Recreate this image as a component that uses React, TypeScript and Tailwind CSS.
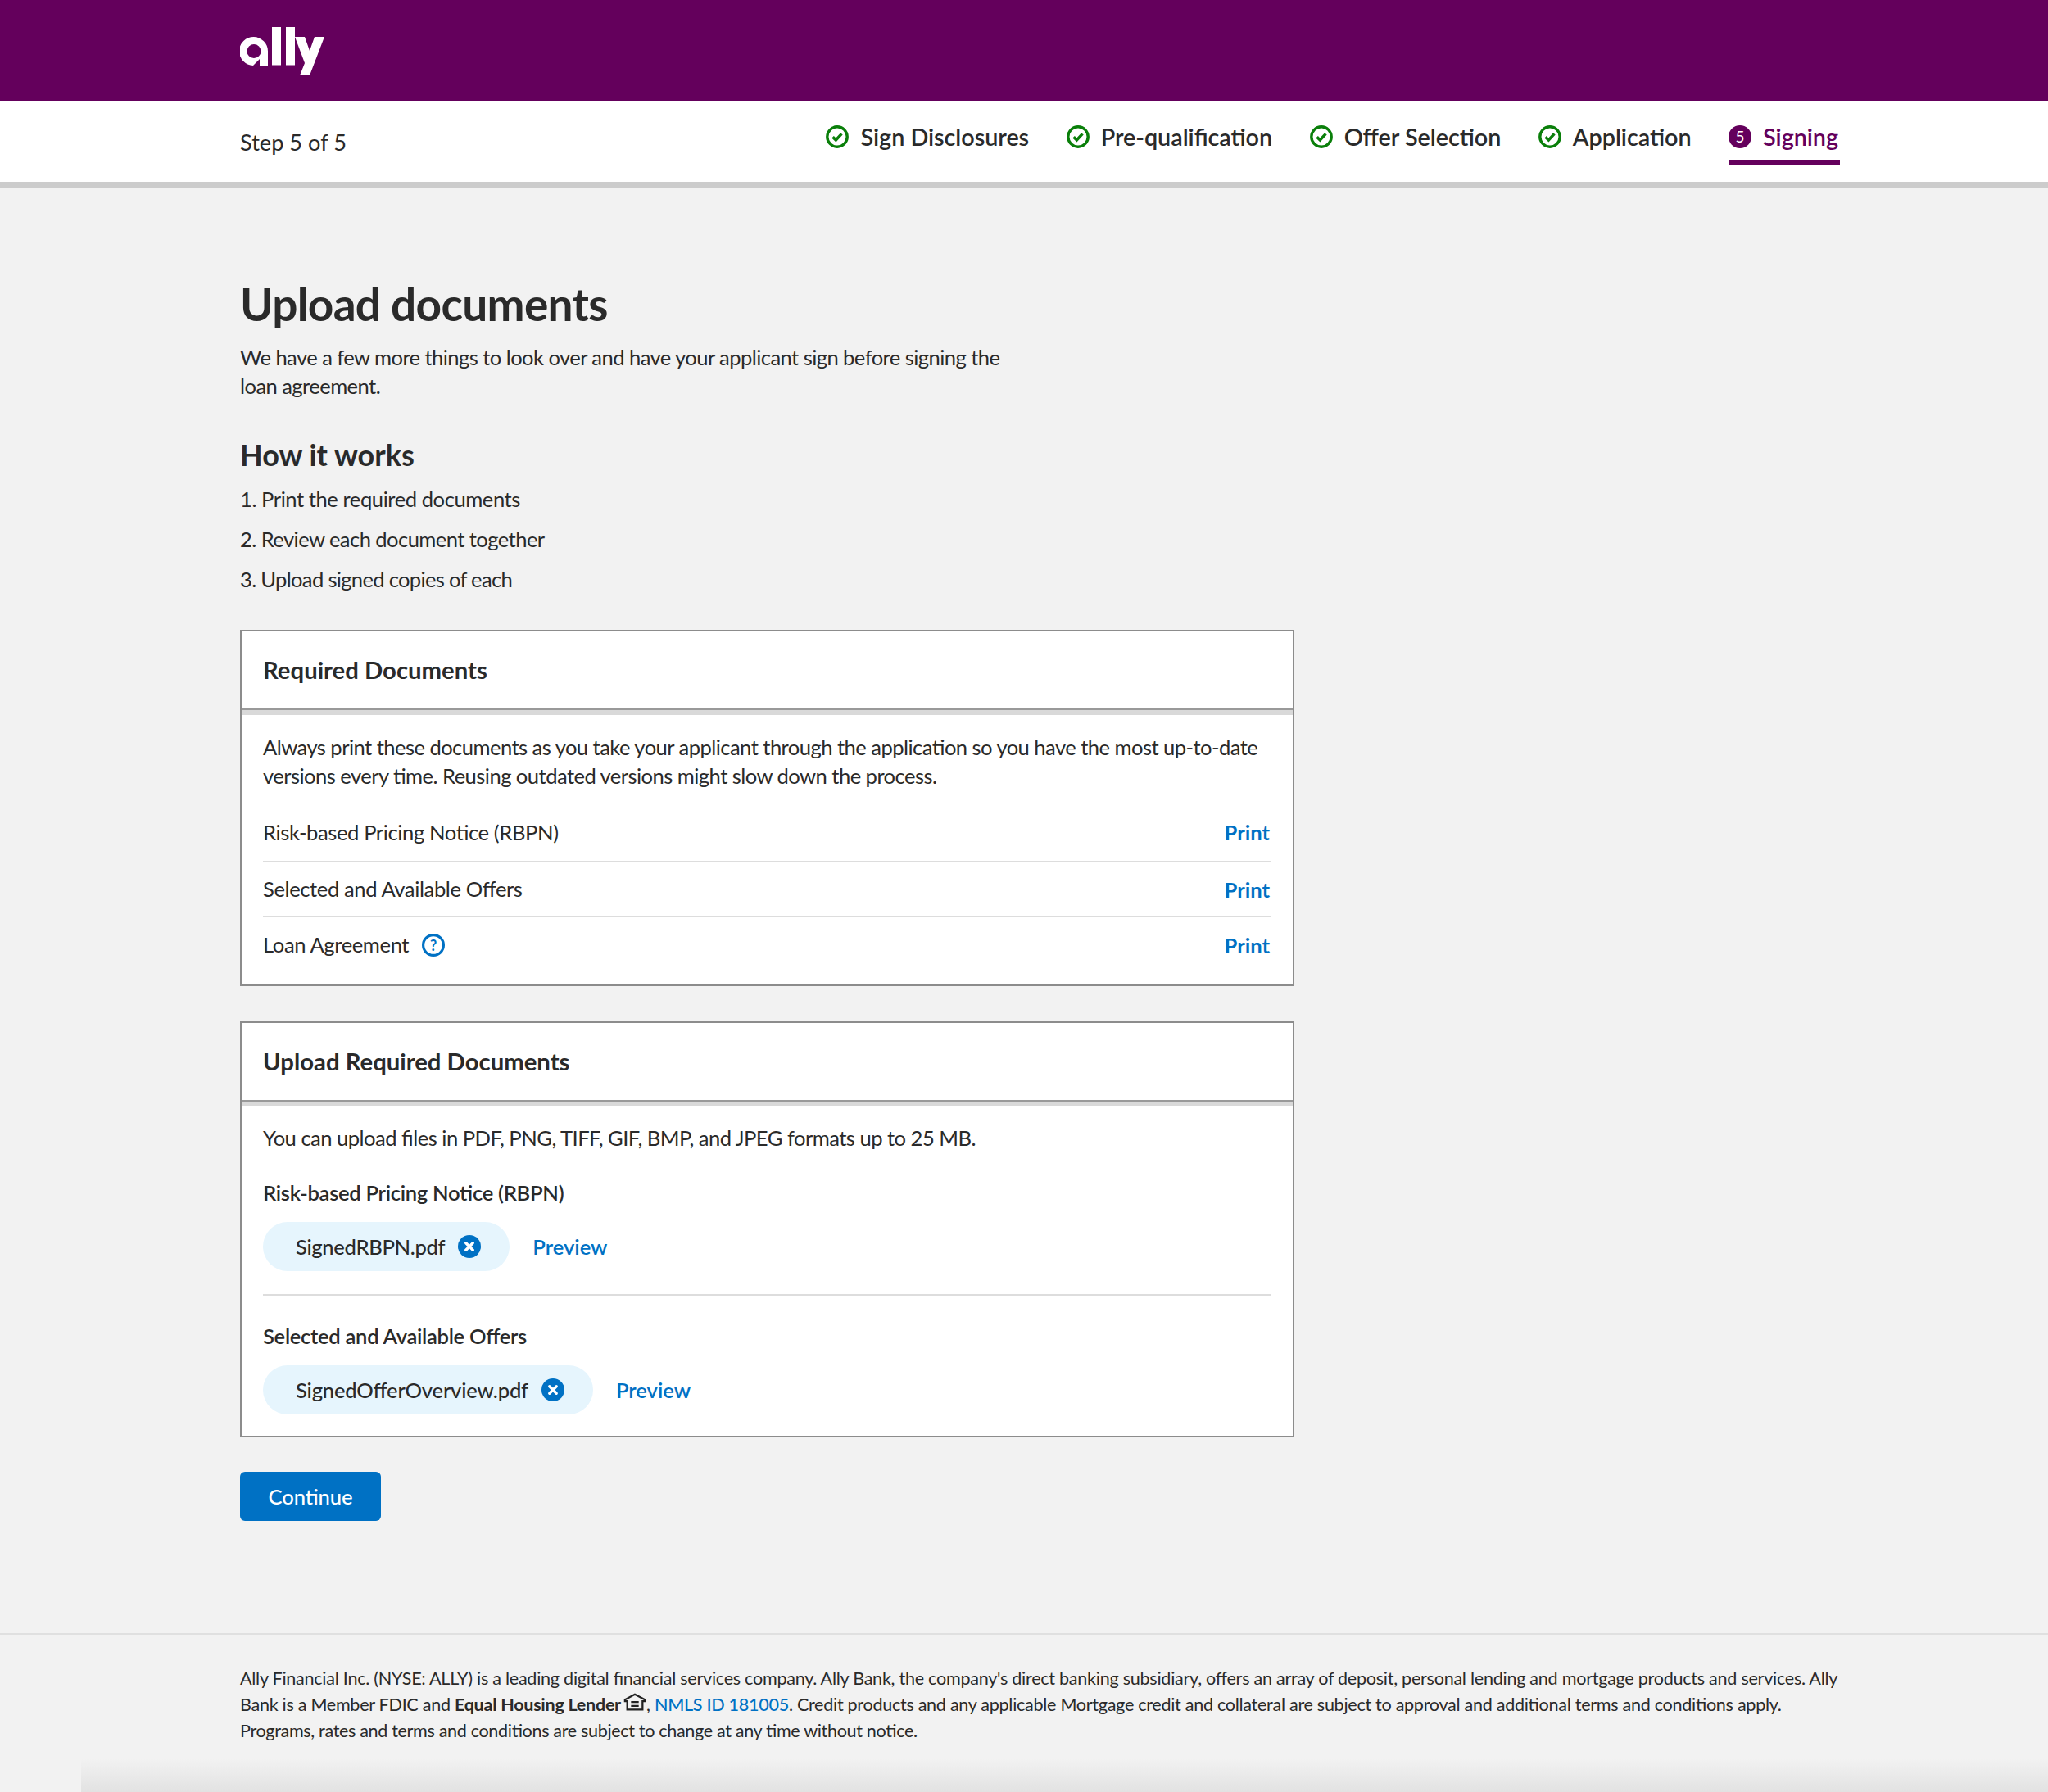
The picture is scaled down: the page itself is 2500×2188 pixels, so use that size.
import { FC, ReactNode } from "react";

const steps = ["Sign Disclosures", "Pre-qualification", "Offer Selection", "Application"];

const CheckIcon: FC = () => (
  <svg width="28" height="28" viewBox="0 0 28 28" className="shrink-0">
    <circle cx="14" cy="14" r="12.2" fill="none" stroke="#0a7f0a" strokeWidth="3.4" />
    <path d="M8.6 14.2l3.8 3.8 7-7.6" fill="none" stroke="#0a7f0a" strokeWidth="3.6" />
  </svg>
);

const RemoveIcon: FC = () => (
  <svg width="28" height="28" viewBox="0 0 28 28" className="shrink-0">
    <circle cx="14" cy="14" r="14" fill="#0071c4" />
    <path d="M9.8 9.8l8.4 8.4M18.2 9.8l-8.4 8.4" stroke="#fff" strokeWidth="3.4" strokeLinecap="round" />
  </svg>
);

const Logo: FC = () => (
  <svg width="103" height="60" viewBox="0 0 103 60" fill="#fff">
    <path
      fillRule="evenodd"
      d="M34 47H24V39L16 47A17.5 17.5 0 1 1 34 29.5ZM17 21A8.5 8.5 0 1 0 17 38A8.5 8.5 0 1 0 17 21Z"
    />
    <rect x="39" y="0" width="11" height="46.5" />
    <rect x="56" y="0" width="11" height="46.5" />
    <path d="M67 12H79L85 29L91 12H103L85 59H73L79 44Z" />
  </svg>
);

const Panel: FC<{ title: string; children: ReactNode }> = ({ title, children }) => (
  <section className="w-[1287px] border-2 border-[#8c8c8c] bg-white">
    <div className="flex h-[96px] items-center border-b-2 border-[#999999] px-[26px] pb-[2px]">
      <h3 className="text-[29.3px] font-bold tracking-normal">{title}</h3>
    </div>
    <div className="h-[6px] bg-[#d9d9d9]" />
    {children}
  </section>
);

const PrintRow: FC<{ label: string; help?: boolean; line?: boolean; tall?: boolean }> = ({ label, help, line, tall }) => (
  <div
    className={`flex items-center justify-between tracking-[-0.4px] ${tall ? "h-[69px] pb-[3px]" : "h-[67px]"} ${
      line ? "border-b-2 border-[#dddddd]" : ""
    }`}
  >
    <span className="flex items-center gap-4">
      {label}
      {help && (
        <svg width="28" height="28" viewBox="0 0 28 28">
          <circle cx="14" cy="14" r="12.4" fill="none" stroke="#0071c4" strokeWidth="3.2" />
          <text x="14" y="20.5" textAnchor="middle" fontSize="18" fontWeight="700" fill="#0071c4">
            ?
          </text>
        </svg>
      )}
    </span>
    <a className="pr-[2px] pt-[1px] font-bold tracking-normal text-[#0071c4]">Print</a>
  </div>
);

const FileChip: FC<{ name: string; tight?: boolean }> = ({ name, tight }) => (
  <div className="flex items-center gap-[28px]">
    <div className="flex h-[60px] items-center gap-[16px] rounded-full bg-[#e6f5fd] pl-[40px] pr-[35px]">
      <span className={`font-medium ${tight ? "tracking-[-0.35px]" : "tracking-[-0.2px]"}`}>{name}</span>
      <RemoveIcon />
    </div>
    <a className="font-semibold tracking-normal text-[#0071c4]">Preview</a>
  </div>
);

export default function App() {
  return (
    <div className="min-h-[2188px] bg-[#f2f2f2] font-['Lato',sans-serif] text-[25.6px] leading-[35px] tracking-[-0.53px] text-[#2a2a2a] [font-feature-settings:'liga'_1]">
      <header className="h-[123px] bg-[#64005c] pl-[293px] pt-[33px]">
        <Logo />
      </header>

      <nav className="flex h-[106px] justify-between border-b-[7px] border-[#cccccc] bg-white pl-[293px] pr-[254px]">
        <div className="pt-[32px] text-[27.2px] leading-[38px] tracking-normal">Step 5 of 5</div>
        <ol className="flex gap-[45.5px] pt-[30px] text-[28.8px] font-semibold leading-[28px] tracking-[-0.05px]">
          {steps.map((step) => (
            <li key={step} className="flex h-[28px] items-center gap-[14px]">
              <CheckIcon />
              {step}
            </li>
          ))}
          <li className="flex h-[42px] items-start gap-[14px] text-[#64005c]">
            <span className="flex flex-col">
              <span className="flex items-center gap-[14px]">
                <span className="flex h-[28px] w-[28px] items-center justify-center rounded-full bg-[#64005c] text-[19px] font-normal text-white">
                  5
                </span>
                Signing
              </span>
              <span className="mt-[14px] h-[7px] w-[136px] bg-[#64005c]" />
            </span>
          </li>
        </ol>
      </nav>

      <main className="px-[293px] pt-[110px]">
        <h1 className="text-[55px] font-bold leading-[64px] tracking-[-0.7px]">Upload documents</h1>
        <p className="mt-[16px] w-[960px] tracking-[-0.58px]">
          We have a few more things to look over and have your applicant sign before signing the loan agreement.
        </p>
        <h2 className="mt-[44px] text-[36px] font-bold leading-[44px] tracking-normal">How it works</h2>
        <ol className="mt-[15px] flex flex-col gap-[14px]">
          <li className="tracking-[-0.45px]">1. Print the required documents</li>
          <li className="tracking-[-0.58px]">2. Review each document together</li>
          <li className="tracking-[-0.7px]">3. Upload signed copies of each</li>
        </ol>

        <div className="mt-[44px] flex flex-col gap-[43px]">
          <Panel title="Required Documents">
            <div className="px-[26px] pb-[15px] pt-[22px]">
              <p className="tracking-[-0.56px]">
                Always print these documents as you take your applicant through the application so you have the most
                up-to-date versions every time. Reusing outdated versions might slow down the process.
              </p>
              <div className="mt-[19px]">
                <PrintRow label="Risk-based Pricing Notice (RBPN)" line tall />
                <PrintRow label="Selected and Available Offers" line />
                <PrintRow label="Loan Agreement" help />
              </div>
            </div>
          </Panel>

          <Panel title="Upload Required Documents">
            <div className="px-[26px] pb-[26px] pt-[21px]">
              <p>You can upload files in PDF, PNG, TIFF, GIF, BMP, and JPEG formats up to 25 MB.</p>
              <h4 className="mt-[32px] font-semibold tracking-[-0.3px]">Risk-based Pricing Notice (RBPN)</h4>
              <div className="mt-[18px]">
                <FileChip name="SignedRBPN.pdf" tight />
              </div>
              <div className="mt-[28px] border-t-2 border-[#dddddd]" />
              <h4 className="mt-[32px] font-semibold tracking-[-0.3px]">Selected and Available Offers</h4>
              <div className="mt-[18px]">
                <FileChip name="SignedOfferOverview.pdf" />
              </div>
            </div>
          </Panel>
        </div>

        <button className="mt-[42px] h-[60px] w-[172px] rounded-[6px] bg-[#0071c4] font-medium tracking-[-0.1px] text-white">
          Continue
        </button>
      </main>

      <footer className="mt-[137px] border-t-2 border-[#e0e0e0] pl-[293px] pt-[37px] text-[21.6px] leading-[32px]">
        <p className="tracking-[-0.275px]">
          Ally Financial Inc. (NYSE: ALLY) is a leading digital financial services company. Ally Bank, the company's
          direct banking subsidiary, offers an array of deposit, personal lending and mortgage products and services.
          Ally
        </p>
        <p className="tracking-[-0.3px]">
          Bank is a Member FDIC and <b>Equal Housing Lender</b>{" "}
          <svg width="28" height="24" viewBox="0 0 30 24" className="-ml-[2px] inline-block align-[-1px]">
            <path d="M15 2L2 9v2h3v11h20V11h3V9z" fill="none" stroke="#222" strokeWidth="2.4" />
            <path d="M10 11h10v2.4H10zM10 16h10v2.4H10z" fill="#222" />
          </svg>
          , <a className="font-medium text-[#0071c4]">NMLS ID 181005</a>. Credit products and any applicable Mortgage
          credit and collateral are subject to approval and additional terms and conditions apply.
        </p>
        <p className="tracking-[-0.35px]">
          Programs, rates and terms and conditions are subject to change at any time without notice.
        </p>
      </footer>
      <div className="ml-[99px] mt-[18px] h-[41px] bg-gradient-to-b from-[#f2f2f2] to-[#e2e2e2]" />
    </div>
  );
}
